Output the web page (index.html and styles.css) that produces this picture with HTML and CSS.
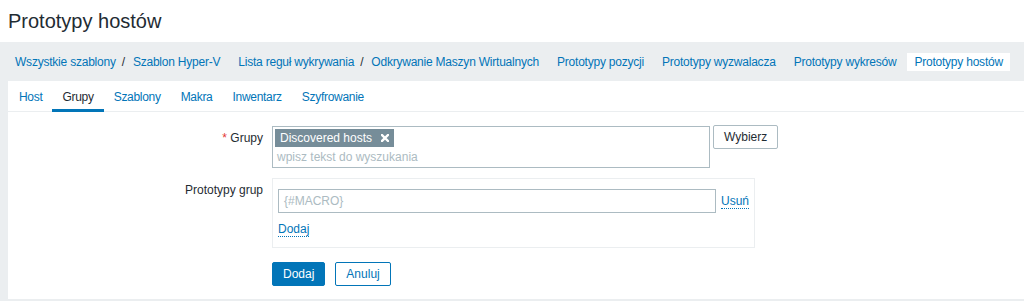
FILE: index.html
```html
<!DOCTYPE html>
<html lang="pl">
<head>
<meta charset="utf-8">
<title>Prototypy hostów</title>
<link rel="stylesheet" href="styles.css">
</head>
<body>
<header class="page-header">
  <h1 class="page-title">Prototypy hostów</h1>
</header>
<nav class="crumbs">
  <div class="crumb-group">
    <a class="crumb-link" href="#">Wszystkie szablony</a><span class="crumb-sep">/</span><a class="crumb-link" href="#">Szablon Hyper-V</a>
  </div>
  <div class="crumb-group">
    <a class="crumb-link" href="#">Lista reguł wykrywania</a><span class="crumb-sep">/</span><a class="crumb-link" href="#">Odkrywanie Maszyn Wirtualnych</a>
  </div>
  <div class="crumb-group"><a class="crumb-link" href="#">Prototypy pozycji</a></div>
  <div class="crumb-group"><a class="crumb-link" href="#">Prototypy wyzwalacza</a></div>
  <div class="crumb-group"><a class="crumb-link" href="#">Prototypy wykresów</a></div>
  <div class="crumb-group crumb-active"><span class="crumb-link">Prototypy hostów</span></div>
</nav>
<main class="panel">
  <ul class="tabs">
    <li class="tab"><a href="#">Host</a></li>
    <li class="tab tab-active"><a href="#">Grupy</a></li>
    <li class="tab"><a href="#">Szablony</a></li>
    <li class="tab"><a href="#">Makra</a></li>
    <li class="tab"><a href="#">Inwentarz</a></li>
    <li class="tab"><a href="#">Szyfrowanie</a></li>
  </ul>
  <form class="form">
    <div class="form-row row-groups">
      <label class="form-label"><span class="req">*</span> Grupy</label>
      <div class="form-field field-inline">
        <div class="multiselect">
          <span class="tag">Discovered hosts<svg class="tag-x" width="8" height="8" viewBox="0 0 8 8"><path d="M1 1L7 7M7 1L1 7" stroke="#fff" stroke-width="2.4" stroke-linecap="square"/></svg></span>
          <div class="ms-input">wpisz tekst do wyszukania</div>
        </div>
        <button type="button" class="btn btn-grey">Wybierz</button>
      </div>
    </div>
    <div class="form-row row-protos">
      <label class="form-label">Prototypy grup</label>
      <div class="form-field">
        <div class="proto-box">
          <div class="proto-line">
            <div class="text-input">{#MACRO}</div>
            <a class="link-action" href="#">Usuń</a>
          </div>
          <div class="proto-add"><a class="link-action" href="#">Dodaj</a></div>
        </div>
      </div>
    </div>
    <div class="form-row row-actions">
      <div class="form-label"></div>
      <div class="form-field actions">
        <button type="button" class="btn btn-primary">Dodaj</button>
        <button type="button" class="btn btn-alt">Anuluj</button>
      </div>
    </div>
  </form>
</main>
</body>
</html>
```

FILE: styles.css
```css
html, body {
  margin: 0;
  padding: 0;
}
body {
  background: #ebeef0;
  font-family: "Liberation Sans", Arial, sans-serif;
  font-size: 12px;
  color: #1f2c33;
  overflow: hidden;
}
a {
  color: #0275b8;
  text-decoration: none;
}
.page-header {
  background: #fff;
  height: 42px;
  padding: 0 8px;
  display: flex;
  align-items: center;
  box-sizing: border-box;
}
.page-title {
  margin: 0;
  font-size: 20px;
  font-weight: normal;
  color: #1f2c33;
  line-height: 24px;
}
.crumbs {
  height: 39px;
  display: flex;
  align-items: center;
  padding: 0 8px;
  gap: 4px;
  white-space: nowrap;
}
.crumb-group {
  flex: none;
  display: flex;
  align-items: center;
  padding: 0 7px;
  height: 18px;
  line-height: 18px;
  letter-spacing: -0.22px;
}
.crumb-sep {
  margin: 0 8px 0 6px;
  color: #1f2c33;
}
.crumb-active {
  background: #fff;
}
.crumb-active .crumb-link {
  color: #0275b8;
}
.panel {
  background: #fff;
  margin-left: 8px;
  height: 218px;
  box-sizing: border-box;
}
.tabs {
  display: flex;
  list-style: none;
  margin: 0;
  padding: 0 0 0 1px;
  height: 30px;
  border-bottom: 1px solid #ebeef0;
}
.tab {
  flex: none;
  letter-spacing: -0.3px;
}
.tab a {
  display: block;
  padding: 4px 10px 0;
  line-height: 24px;
  border-bottom: 3px solid transparent;
}
.tab-active a {
  color: #1f2c33;
  border-bottom-color: #0275b8;
}
.form {
  padding-top: 14px;
}
.form-row {
  display: flex;
  align-items: flex-start;
}
.row-groups {
  margin-bottom: 10px;
}
.row-protos {
  margin-bottom: 14px;
}
.form-label {
  width: 264px;
  flex: none;
  box-sizing: border-box;
  padding: 5px 9px 0 0;
  text-align: right;
  line-height: 14px;
}
.req {
  color: #e33734;
}
.field-inline {
  display: flex;
  align-items: flex-start;
}
.multiselect {
  width: 438px;
  height: 42px;
  box-sizing: border-box;
  border: 1px solid #acbbc2;
  padding: 2px;
}
.tag {
  display: inline-flex;
  align-items: center;
  height: 18px;
  background: #768d99;
  color: #fff;
  padding: 0 5px 0 5px;
  gap: 9px;
  line-height: 18px;
}
.tag-x {
  display: block;
}
.ms-input {
  color: #acbbc2;
  padding-left: 2px;
  line-height: 20px;
}
.btn {
  height: 24px;
  box-sizing: border-box;
  padding: 0 10px;
  font-family: inherit;
  font-size: 12px;
  border: 1px solid;
  border-radius: 2px;
  cursor: pointer;
  line-height: 22px;
}
.btn-grey {
  margin-left: 3px;
  margin-top: -1px;
  background: #fff;
  border-color: #acbbc2;
  color: #1f2c33;
}
.btn-primary {
  background: #0275b8;
  border-color: #0275b8;
  color: #fff;
}
.btn-alt {
  background: #fff;
  border-color: #0275b8;
  color: #0275b8;
}
.actions {
  display: flex;
  gap: 10px;
}
.proto-box {
  width: 483px;
  box-sizing: border-box;
  border: 1px solid #ebeef0;
  padding: 10px 5px 10px 5px;
}
.proto-line {
  display: flex;
  align-items: center;
  gap: 5px;
}
.text-input {
  width: 439px;
  height: 24px;
  box-sizing: border-box;
  border: 1px solid #acbbc2;
  padding: 0 5px;
  line-height: 22px;
  color: #acbbc2;
}
.link-action {
  border-bottom: 1px dotted #0275b8;
  line-height: 14px;
}
.proto-add {
  margin-top: 9px;
  line-height: 14px;
  height: 15px;
}
```
